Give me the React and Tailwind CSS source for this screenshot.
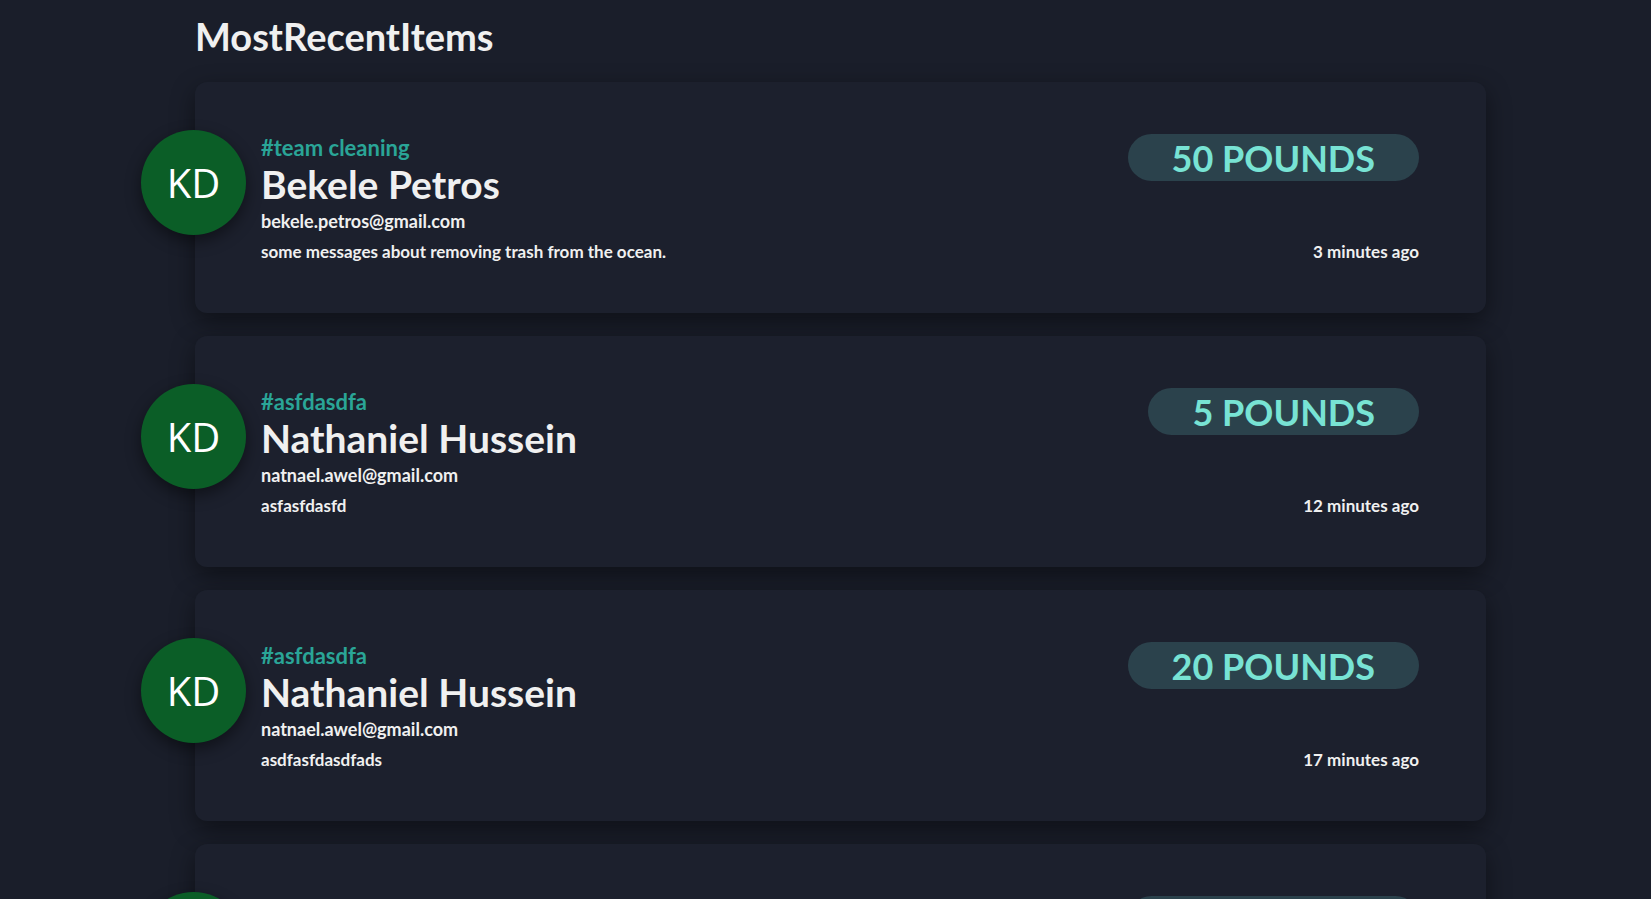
const items = [
  {
    id: 1,
    tag: '#team cleaning',
    name: 'Bekele Petros',
    email: 'bekele.petros@gmail.com',
    message: 'some messages about removing trash from the ocean.',
    pounds: 50,
    time: '3 minutes ago',
  },
  {
    id: 2,
    tag: '#asfdasdfa',
    name: 'Nathaniel Hussein',
    email: 'natnael.awel@gmail.com',
    message: 'asfasfdasfd',
    pounds: 5,
    time: '12 minutes ago',
  },
  {
    id: 3,
    tag: '#asfdasdfa',
    name: 'Nathaniel Hussein',
    email: 'natnael.awel@gmail.com',
    message: 'asdfasfdasdfads',
    pounds: 20,
    time: '17 minutes ago',
  },
  {
    id: 4,
    tag: '#asfdasdfa',
    name: 'Nathaniel Hussein',
    email: 'natnael.awel@gmail.com',
    message: 'asdfasdf',
    pounds: 10,
    time: '20 minutes ago',
  },
];

function Avatar({ initials }) {
  return (
    <div className="-ml-[54px] flex h-[105px] w-[105px] shrink-0 items-center justify-center rounded-full bg-[#0b5e27] shadow-[0_6px_16px_rgba(0,0,0,0.45)]">
      <span className="font-['Open_Sans',sans-serif] text-[40px] leading-none text-white">{initials}</span>
    </div>
  );
}

function ItemCard({ item }) {
  return (
    <div className="mb-[23px] flex h-[231px] w-[1291px] rounded-xl bg-[#1c202d] pt-[48px] pr-[67px] shadow-[0_8px_24px_rgba(0,0,0,0.45)]">
      <Avatar initials="KD" />
      <div className="ml-[15px] flex min-w-0 flex-1 flex-col pt-[5px]">
        <p className="text-[22px] leading-[26px] font-bold text-[#2aa597]">{item.tag}</p>
        <p className="mt-[1px] text-[39px] leading-[44px] font-bold text-[#f0f0f0]">{item.name}</p>
        <p className="mt-[4px] text-[18px] leading-[22px] font-bold text-[#f0f0f0]">{item.email}</p>
        <p className="mt-[9px] text-[17px] leading-[22px] font-bold text-[#f0f0f0]">{item.message}</p>
      </div>
      <div className="flex flex-col items-end pt-[4px]">
        <span className="flex h-[47px] items-center rounded-full bg-[#2b424c] px-[44px] text-[36px] font-bold text-[#78e3d4]">
          {item.pounds} POUNDS
        </span>
        <p className="mt-[60px] text-[17px] leading-[22px] font-bold text-[#f0f0f0]">{item.time}</p>
      </div>
    </div>
  );
}

export default function App() {
  return (
    <div className="min-h-screen bg-[#1a1e2a] font-['Lato',sans-serif]">
      <div className="ml-[195px]">
        <h1 className="pt-[12px] pb-[22px] text-[38px] leading-[48px] font-bold text-[#f0f0f0]">MostRecentItems</h1>
        {items.map((item) => (
          <ItemCard key={item.id} item={item} />
        ))}
      </div>
    </div>
  );
}
